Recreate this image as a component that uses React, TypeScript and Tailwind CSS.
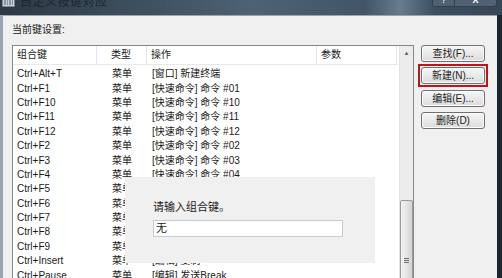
import React from "react";

type Row = { key: string; type: string; action: string };

const ROWS: Row[] = [
  { key: "Ctrl+Alt+T", type: "菜单", action: "[窗口] 新建终端" },
  { key: "Ctrl+F1", type: "菜单", action: "[快速命令] 命令 #01" },
  { key: "Ctrl+F10", type: "菜单", action: "[快速命令] 命令 #10" },
  { key: "Ctrl+F11", type: "菜单", action: "[快速命令] 命令 #11" },
  { key: "Ctrl+F12", type: "菜单", action: "[快速命令] 命令 #12" },
  { key: "Ctrl+F2", type: "菜单", action: "[快速命令] 命令 #02" },
  { key: "Ctrl+F3", type: "菜单", action: "[快速命令] 命令 #03" },
  { key: "Ctrl+F4", type: "菜单", action: "[快速命令] 命令 #04" },
  { key: "Ctrl+F5", type: "菜单", action: "[快速命令] 命令 #05" },
  { key: "Ctrl+F6", type: "菜单", action: "[快速命令] 命令 #06" },
  { key: "Ctrl+F7", type: "菜单", action: "[快速命令] 命令 #07" },
  { key: "Ctrl+F8", type: "菜单", action: "[快速命令] 命令 #08" },
  { key: "Ctrl+F9", type: "菜单", action: "[快速命令] 命令 #09" },
  { key: "Ctrl+Insert", type: "菜单", action: "[编辑] 复制" },
  { key: "Ctrl+Pause", type: "菜单", action: "[编辑] 发送Break" },
];

const BUTTONS = ["查找(F)...", "新建(N)...", "编辑(E)...", "删除(D)"];

const Btn = ({ label }: { label: string }) => (
  <div className="w-[64px] h-[17px] flex items-center justify-center rounded-[3px] border border-[#707070] bg-gradient-to-b from-[#f6f6f6] to-[#dcdcdc] text-[#222] shadow-[inset_0_0_0_1px_#fbfbfb]">
    {label}
  </div>
);

export default function App() {
  return (
    <div
      className="relative w-[502px] h-[278px] overflow-hidden bg-[#2a3440] text-[10px] leading-none"
      style={{ fontFamily: '"Liberation Sans", "Noto Sans CJK SC", sans-serif' }}
    >
      {/* title bar */}
      <div className="relative h-[15px] flex items-start bg-gradient-to-r from-[#2c3944] via-[#4d6275] to-[#36475a]">
        <div className="ml-[2px] mt-[-2px] w-[13px] h-[9px] rounded-[1px] bg-[#c9d0d6] border border-[#7b8792] grid grid-cols-4 gap-[1px] p-[1px]">
          <span className="bg-[#8a949d]" />
          <span className="bg-[#8a949d]" />
          <span className="bg-[#8a949d]" />
          <span className="bg-[#8a949d]" />
        </div>
        <span className="ml-[5px] mt-[-4px] text-[12px] text-[#1c2630] tracking-[0.5px]">自定义按键对应</span>
        <div className="absolute left-[365px] top-[0px] w-[70px] h-[15px] bg-gradient-to-r from-transparent via-[#8fa7bb] to-transparent opacity-50" />
        <div className="absolute left-[432px] top-[-8px] flex">
          <div className="w-[23px] h-[15px] rounded-bl-[3px] border border-[#33404a] bg-[#4f6172] flex items-end justify-center pb-[1px] text-white text-[9px]">?</div>
          <div className="w-[42px] h-[15px] rounded-br-[3px] border border-l-0 border-[#33404a] bg-[#4f6172] flex items-end justify-center pb-[1px] text-white text-[9px] font-bold">X</div>
        </div>
      </div>

      {/* body */}
      <div className="flex h-[263px]">
        <div className="w-[2px] bg-[#9aa6b1]" />
        <div className="w-[495px] bg-[#f0f0f0] border-l border-t border-[#a0a4a8] pl-[9px] pt-[9px]">
          <div className="h-[12px] text-[#1a1a1a]">当前键设置:</div>
          <div className="flex mt-[8px] gap-[7px]">
            {/* list */}
            <div className="w-[402px] h-[240px] bg-white border border-[#828790] flex">
              <div className="w-[385px]">
                <div className="flex h-[19px] items-center border-b border-[#e8e8e8] text-[#1a1a1a]">
                  <div className="w-[84px] h-full flex items-center pl-[4px] border-r border-[#e5e5e5]">组合键</div>
                  <div className="w-[50px] h-full flex items-center pl-[14px] border-r border-[#e5e5e5]">类型</div>
                  <div className="w-[170px] h-full flex items-center pl-[4px] border-r border-[#e5e5e5]">操作</div>
                  <div className="w-[80px] h-full flex items-center pl-[4px] border-r border-[#e5e5e5]">参数</div>
                </div>
                <div className="pt-[2px] text-[#1a1a1a]">
                  {ROWS.map((r) => (
                    <div key={r.key} className="flex h-[14.4px] items-center">
                      <div className="w-[84px] pl-[4px]">{r.key}</div>
                      <div className="w-[50px] pl-[15px]">{r.type}</div>
                      <div className="w-[170px] pl-[5px] whitespace-nowrap">{r.action}</div>
                    </div>
                  ))}
                </div>
              </div>
              {/* scrollbar */}
              <div className="ml-[1px] w-[14px] h-full bg-[#ececec] border-l border-[#e2e2e2] flex flex-col items-center">
                <div className="h-[16px] flex items-center justify-center text-[#606060] text-[6px]">▲</div>
                <div className="mt-[140px] w-[13px] h-[90px] rounded-[2px] border border-[#9a9a9a] bg-gradient-to-r from-[#f2f2f2] via-[#e4e4e4] to-[#d4d4d4] flex flex-col items-center justify-end pb-[20px] gap-[1px]">
                  <span className="w-[5px] h-[1px] bg-[#707070]" />
                  <span className="w-[5px] h-[1px] bg-[#707070]" />
                  <span className="w-[5px] h-[1px] bg-[#707070]" />
                </div>
              </div>
            </div>
            {/* buttons */}
            <div className="flex flex-col gap-[5px]">
              <Btn label={BUTTONS[0]} />
              <div className="m-[-3px] p-[1px] border-2 border-[#c0121a]">
                <Btn label={BUTTONS[1]} />
              </div>
              <div className="mt-[1px]">
                <Btn label={BUTTONS[2]} />
              </div>
              <Btn label={BUTTONS[3]} />
            </div>
          </div>
        </div>
        <div className="w-[5px] bg-[#1e252c]" />
      </div>

      {/* key input popup */}
      <div className="absolute left-[125px] top-[177px] w-[250px] h-[86px] bg-[#f0f0f0] pl-[28px] pt-[25px]">
        <div className="text-[11px] text-[#1a1a1a]">请输入组合键。</div>
        <div className="mt-[7px] w-[190px] h-[17px] bg-white border border-[#c8ccd2] flex items-center pl-[2px] text-[11px] text-[#1a1a1a]">无</div>
      </div>
    </div>
  );
}
